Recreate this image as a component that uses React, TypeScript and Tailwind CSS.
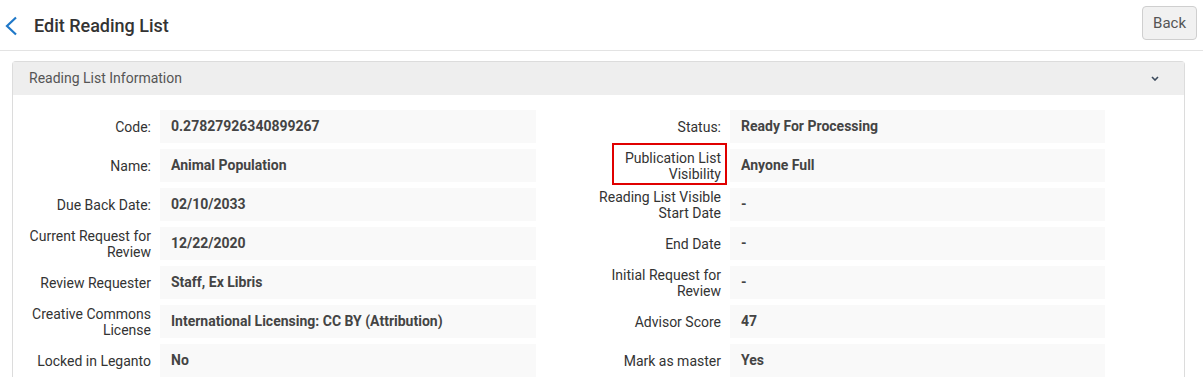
type Field = { label: string; value: string; marked?: boolean };

const left: Field[] = [
  { label: "Code:", value: "0.27827926340899267" },
  { label: "Name:", value: "Animal Population" },
  { label: "Due Back Date:", value: "02/10/2033" },
  { label: "Current Request for Review", value: "12/22/2020" },
  { label: "Review Requester", value: "Staff, Ex Libris" },
  { label: "Creative Commons License", value: "International Licensing: CC BY (Attribution)" },
  { label: "Locked in Leganto", value: "No" },
];

const right: Field[] = [
  { label: "Status:", value: "Ready For Processing" },
  { label: "Publication List Visibility", value: "Anyone Full", marked: true },
  { label: "Reading List Visible Start Date", value: "-" },
  { label: "End Date", value: "-" },
  { label: "Initial Request for Review", value: "-" },
  { label: "Advisor Score", value: "47" },
  { label: "Mark as master", value: "Yes" },
];

function Pair({ field, labelW, gap, boxW }: { field: Field; labelW: string; gap: string; boxW: string }) {
  return (
    <div className={`flex items-stretch ${gap}`}>
      <div className={`flex ${labelW} shrink-0 items-center justify-end text-right text-[14px] leading-[16px] text-[#333]`}>
        {field.marked ? (
          <span className="relative max-w-[100px]">
            {field.label}
            <span className="absolute -top-[7px] -bottom-[3px] -left-[9px] -right-[6px] border-2 border-[#e00000]" />
          </span>
        ) : (
          <span>{field.label}</span>
        )}
      </div>
      <div className={`flex h-[33px] ${boxW} shrink-0 items-center bg-[#f9f9f9] px-[11px] text-[14px] font-bold text-[#444]`}>
        {field.value}
      </div>
    </div>
  );
}

export default function App() {
  return (
    <div className="h-[381px] w-[1203px] overflow-hidden bg-white font-['Roboto',sans-serif]">
      <div className="flex h-[51px] items-center justify-between border-b border-[#e3e3e3] pl-[4px] pr-[6px]">
        <div className="flex items-center gap-[16px]">
          <svg width="14" height="20" viewBox="0 0 14 20" fill="none" className="mt-[1px]">
            <path d="M12 1.5L3 10l9 8.5" stroke="#1f78c8" strokeWidth="2.2" />
          </svg>
          <h1 className="text-[18px] font-medium text-[#333]">Edit Reading List</h1>
        </div>
        <button className="mt-[-4px] h-[34px] rounded-[4px] border border-[#cfcfcf] bg-[#f1f1f1] px-[10px] text-[15px] text-[#555]">
          Back
        </button>
      </div>

      <div className="ml-[12px] mt-[10px] w-[1173px] rounded-t-[4px] border-x border-t border-[#dcdcdc]">
        <div className="flex h-[33px] items-center justify-between bg-[#eeeeee] pl-[16px] pr-[25px] text-[14px] text-[#555]">
          <span>Reading List Information</span>
          <svg width="8" height="5" viewBox="0 0 8 5" fill="none">
            <path d="M1 1l3 3 3-3" stroke="#3b4a5c" strokeWidth="1.6" />
          </svg>
        </div>
        <div className="flex flex-col gap-[6px] pt-[15px]">
          {left.map((f, i) => (
            <div key={f.label} className="flex">
              <Pair field={f} labelW="w-[138px]" gap="gap-[9px]" boxW="w-[376px]" />
              <div className="ml-[45px]">
                <Pair field={right[i]} labelW="w-[140px]" gap="gap-[9px]" boxW="w-[375px]" />
              </div>
            </div>
          ))}
        </div>
      </div>
    </div>
  );
}
